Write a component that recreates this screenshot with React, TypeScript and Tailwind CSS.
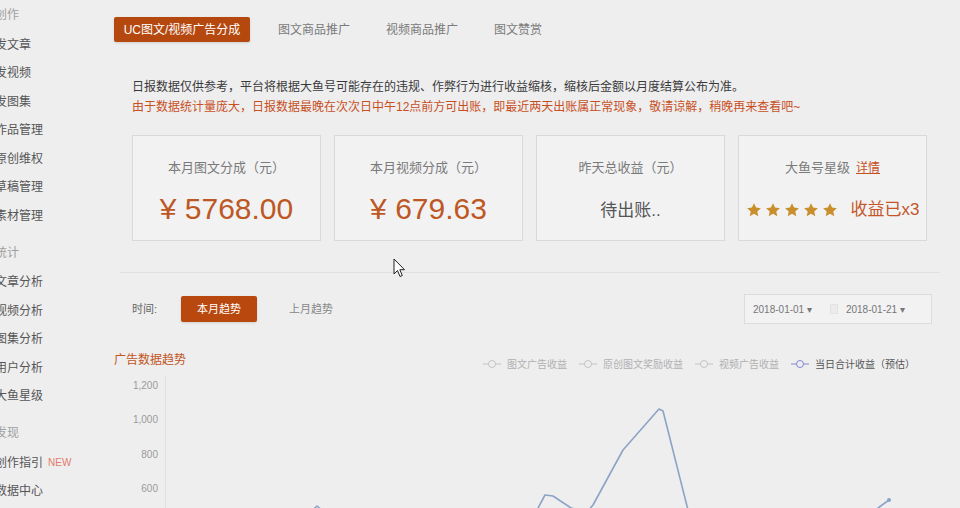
import React from 'react'

const menu = [
  { title: '创作', items: ['发文章', '发视频', '发图集', '作品管理', '原创维权', '草稿管理', '素材管理'] },
  { title: '统计', items: ['文章分析', '视频分析', '图集分析', '用户分析', '大鱼星级'] },
  { title: '发现', items: ['创作指引', '数据中心'] },
]

const tabs = ['图文商品推广', '视频商品推广', '图文赞赏']

const legend = [
  { label: '图文广告收益', active: false },
  { label: '原创图文奖励收益', active: false },
  { label: '视频广告收益', active: false },
  { label: '当日合计收益（预估）', active: true },
]

// page coords minus plot origin (165, 375)
const linePoints = [
  [0, 170], [115, 165], [151, 131], [170, 147], [215, 170], [355, 165], [379, 120], [387, 121],
  [405, 133], [421, 137], [427, 130], [457, 75], [493, 34], [497, 36], [522, 135], [535, 170],
  [695, 170], [712, 133], [723, 125],
]

const Star = () => (
  <svg width="16" height="16" viewBox="0 0 24 24" className="fill-[#c98f2c]">
    <path d="M12 1.8l3.1 6.6 7.2.8-5.4 4.9 1.5 7.1L12 17.6l-6.4 3.6 1.5-7.1L1.7 9.2l7.2-.8z" />
  </svg>
)

const Sidebar = () => (
  <div className="w-[100px] shrink-0 overflow-hidden pt-[1px]">
    {menu.map((group, gi) => (
      <div key={group.title} className={gi === 0 ? '' : 'mt-[10px]'}>
        <div className="h-[28px] flex items-center -ml-[5px] text-[12px] text-[#a0a0a0] whitespace-nowrap">
          {group.title}
        </div>
        {group.items.map((item) => (
          <div key={item} className="h-[28.5px] pt-[3px] flex items-center -ml-[5px] text-[12px] text-[#555] whitespace-nowrap">
            {item}
            {item === '创作指引' && <span className="ml-[5px] text-[10px] text-[#e27b6b]">NEW</span>}
          </div>
        ))}
      </div>
    ))}
  </div>
)

const Card = ({ title, children }: { title: React.ReactNode; children: React.ReactNode }) => (
  <div className="h-[106px] border border-[#d9d9d9] bg-[#f2f2f3] flex flex-col items-center">
    <div className="mt-[22px] h-[20px] flex items-center text-[13px] text-[#7a7a7a]">{title}</div>
    <div className="mt-[10px] h-[40px] flex items-center">{children}</div>
  </div>
)

export default function App() {
  return (
    <div className="w-[960px] h-[508px] overflow-hidden flex bg-[#eeeeef] relative font-['Liberation_Sans','Noto_Sans_CJK_SC',sans-serif]">
      <Sidebar />

      <div className="flex-1 flex flex-col pl-[14px] pt-[17px]">
        {/* tabs */}
        <div className="flex items-center h-[25px]">
          <div className="w-[136px] h-[25px] flex items-center justify-center bg-[#b5480f] text-white text-[12px] rounded-[2px] shadow-sm">
            UC图文/视频广告分成
          </div>
          <div className="ml-[10px] flex">
            {tabs.map((t) => (
              <div key={t} className="px-[18px] text-[12px] text-[#7a7a7a]">{t}</div>
            ))}
          </div>
        </div>

        {/* notice */}
        <div className="mt-[35px] ml-[18px] text-[12px] leading-[20px]">
          <p className="text-[#3a3a3a]">日报数据仅供参考，平台将根据大鱼号可能存在的违规、作弊行为进行收益缩核，缩核后金额以月度结算公布为准。</p>
          <p className="text-[#c8501e]">由于数据统计量庞大，日报数据最晚在次次日中午12点前方可出账，即最近两天出账属正常现象，敬请谅解，稍晚再来查看吧~</p>
        </div>

        {/* cards */}
        <div className="mt-[18px] ml-[18px] w-[795px] grid grid-cols-4 gap-[13px]">
          <Card title="本月图文分成（元）">
            <span className="text-[30px] text-[#bd5825]">¥ 5768.00</span>
          </Card>
          <Card title="本月视频分成（元）">
            <span className="text-[30px] text-[#bd5825]">¥ 679.63</span>
          </Card>
          <Card title="昨天总收益（元）">
            <span className="text-[17px] text-[#555] mt-[6px]">待出账..</span>
          </Card>
          <Card
            title={
              <>
                大鱼号星级
                <span className="ml-[6px] text-[12px] text-[#c8501e] underline">详情</span>
              </>
            }
          >
            <div className="flex items-center gap-[3px] mt-[4px]">
              <Star />
              <Star />
              <Star />
              <Star />
              <Star />
              <span className="ml-[10px] text-[17px] text-[#c4562a]">收益已x3</span>
            </div>
          </Card>
        </div>

        {/* divider */}
        <div className="mt-[31px] ml-[6px] w-[820px] border-t border-[#e1e1e2]" />

        {/* time row */}
        <div className="mt-[21px] ml-[18px] w-[800px] h-[30px] flex items-center">
          <span className="text-[11px] text-[#666]">时间:</span>
          <div className="ml-[24px] w-[76px] h-[26px] flex items-center justify-center bg-[#b9480f] text-white text-[11px] rounded-[2px] shadow-sm">
            本月趋势
          </div>
          <span className="ml-[32px] text-[11px] text-[#888]">上月趋势</span>
          <div className="ml-auto w-[188px] h-[30px] border border-[#dcdcdc] bg-[#f2f2f3] flex items-center px-[8px] text-[10px] text-[#777]">
            <span>2018-01-01 ▾</span>
            <span className="ml-[18px] w-[8px] h-[10px] border border-[#e2e2e2] bg-[#ececec]" />
            <span className="ml-[8px]">2018-01-21 ▾</span>
          </div>
        </div>

        {/* chart header */}
        <div className="mt-[26px] w-[801px] h-[20px] flex items-center justify-between">
          <span className="text-[12px] text-[#c2541c]">广告数据趋势</span>
          <div className="flex items-center gap-[12px] mt-[8px] text-[10px]">
            {legend.map((l) => (
              <div key={l.label} className="flex items-center gap-[6px]">
                <svg width="18" height="10" viewBox="0 0 18 10">
                  <line x1="0" y1="5" x2="18" y2="5" stroke={l.active ? '#8088d0' : '#c4c4c4'} strokeWidth="1" />
                  <circle cx="9" cy="5" r="3.5" fill="#eeeeef" stroke={l.active ? '#8088d0' : '#c4c4c4'} strokeWidth="1" />
                </svg>
                <span className={l.active ? 'text-[#555]' : 'text-[#b0b0b0]'}>{l.label}</span>
              </div>
            ))}
          </div>
        </div>

        {/* chart */}
        <div className="flex items-start">
          <div className="w-[44px] -mt-[2px] flex flex-col text-[10px] text-[#9a9a9a]">
            {['1,200', '1,000', '800', '600', '400'].map((v) => (
              <div key={v} className="h-[34.5px] flex items-center justify-end">{v}</div>
            ))}
          </div>
          <div className="ml-[7px] mt-[5px] w-[775px] h-[200px] border-l border-[#e0e0e0]">
            <svg width="775" height="200" viewBox="0 0 775 200">
              <polyline
                points={linePoints.map((p) => p.join(',')).join(' ')}
                fill="none"
                stroke="#8ba4c6"
                strokeWidth="1.6"
                strokeLinejoin="round"
              />
              <circle cx="723" cy="125" r="2" fill="#8ba4c6" />
            </svg>
          </div>
        </div>
      </div>

      {/* mouse pointer */}
      <svg className="absolute left-[393px] top-[258px]" width="13" height="20" viewBox="0 0 13 20">
        <path d="M1 1 L1 16 L4.5 12.5 L7 18.5 L9.3 17.5 L6.8 11.7 L11.5 11.7 Z" fill="#fff" stroke="#222" strokeWidth="1" strokeLinejoin="round" />
      </svg>
    </div>
  )
}
